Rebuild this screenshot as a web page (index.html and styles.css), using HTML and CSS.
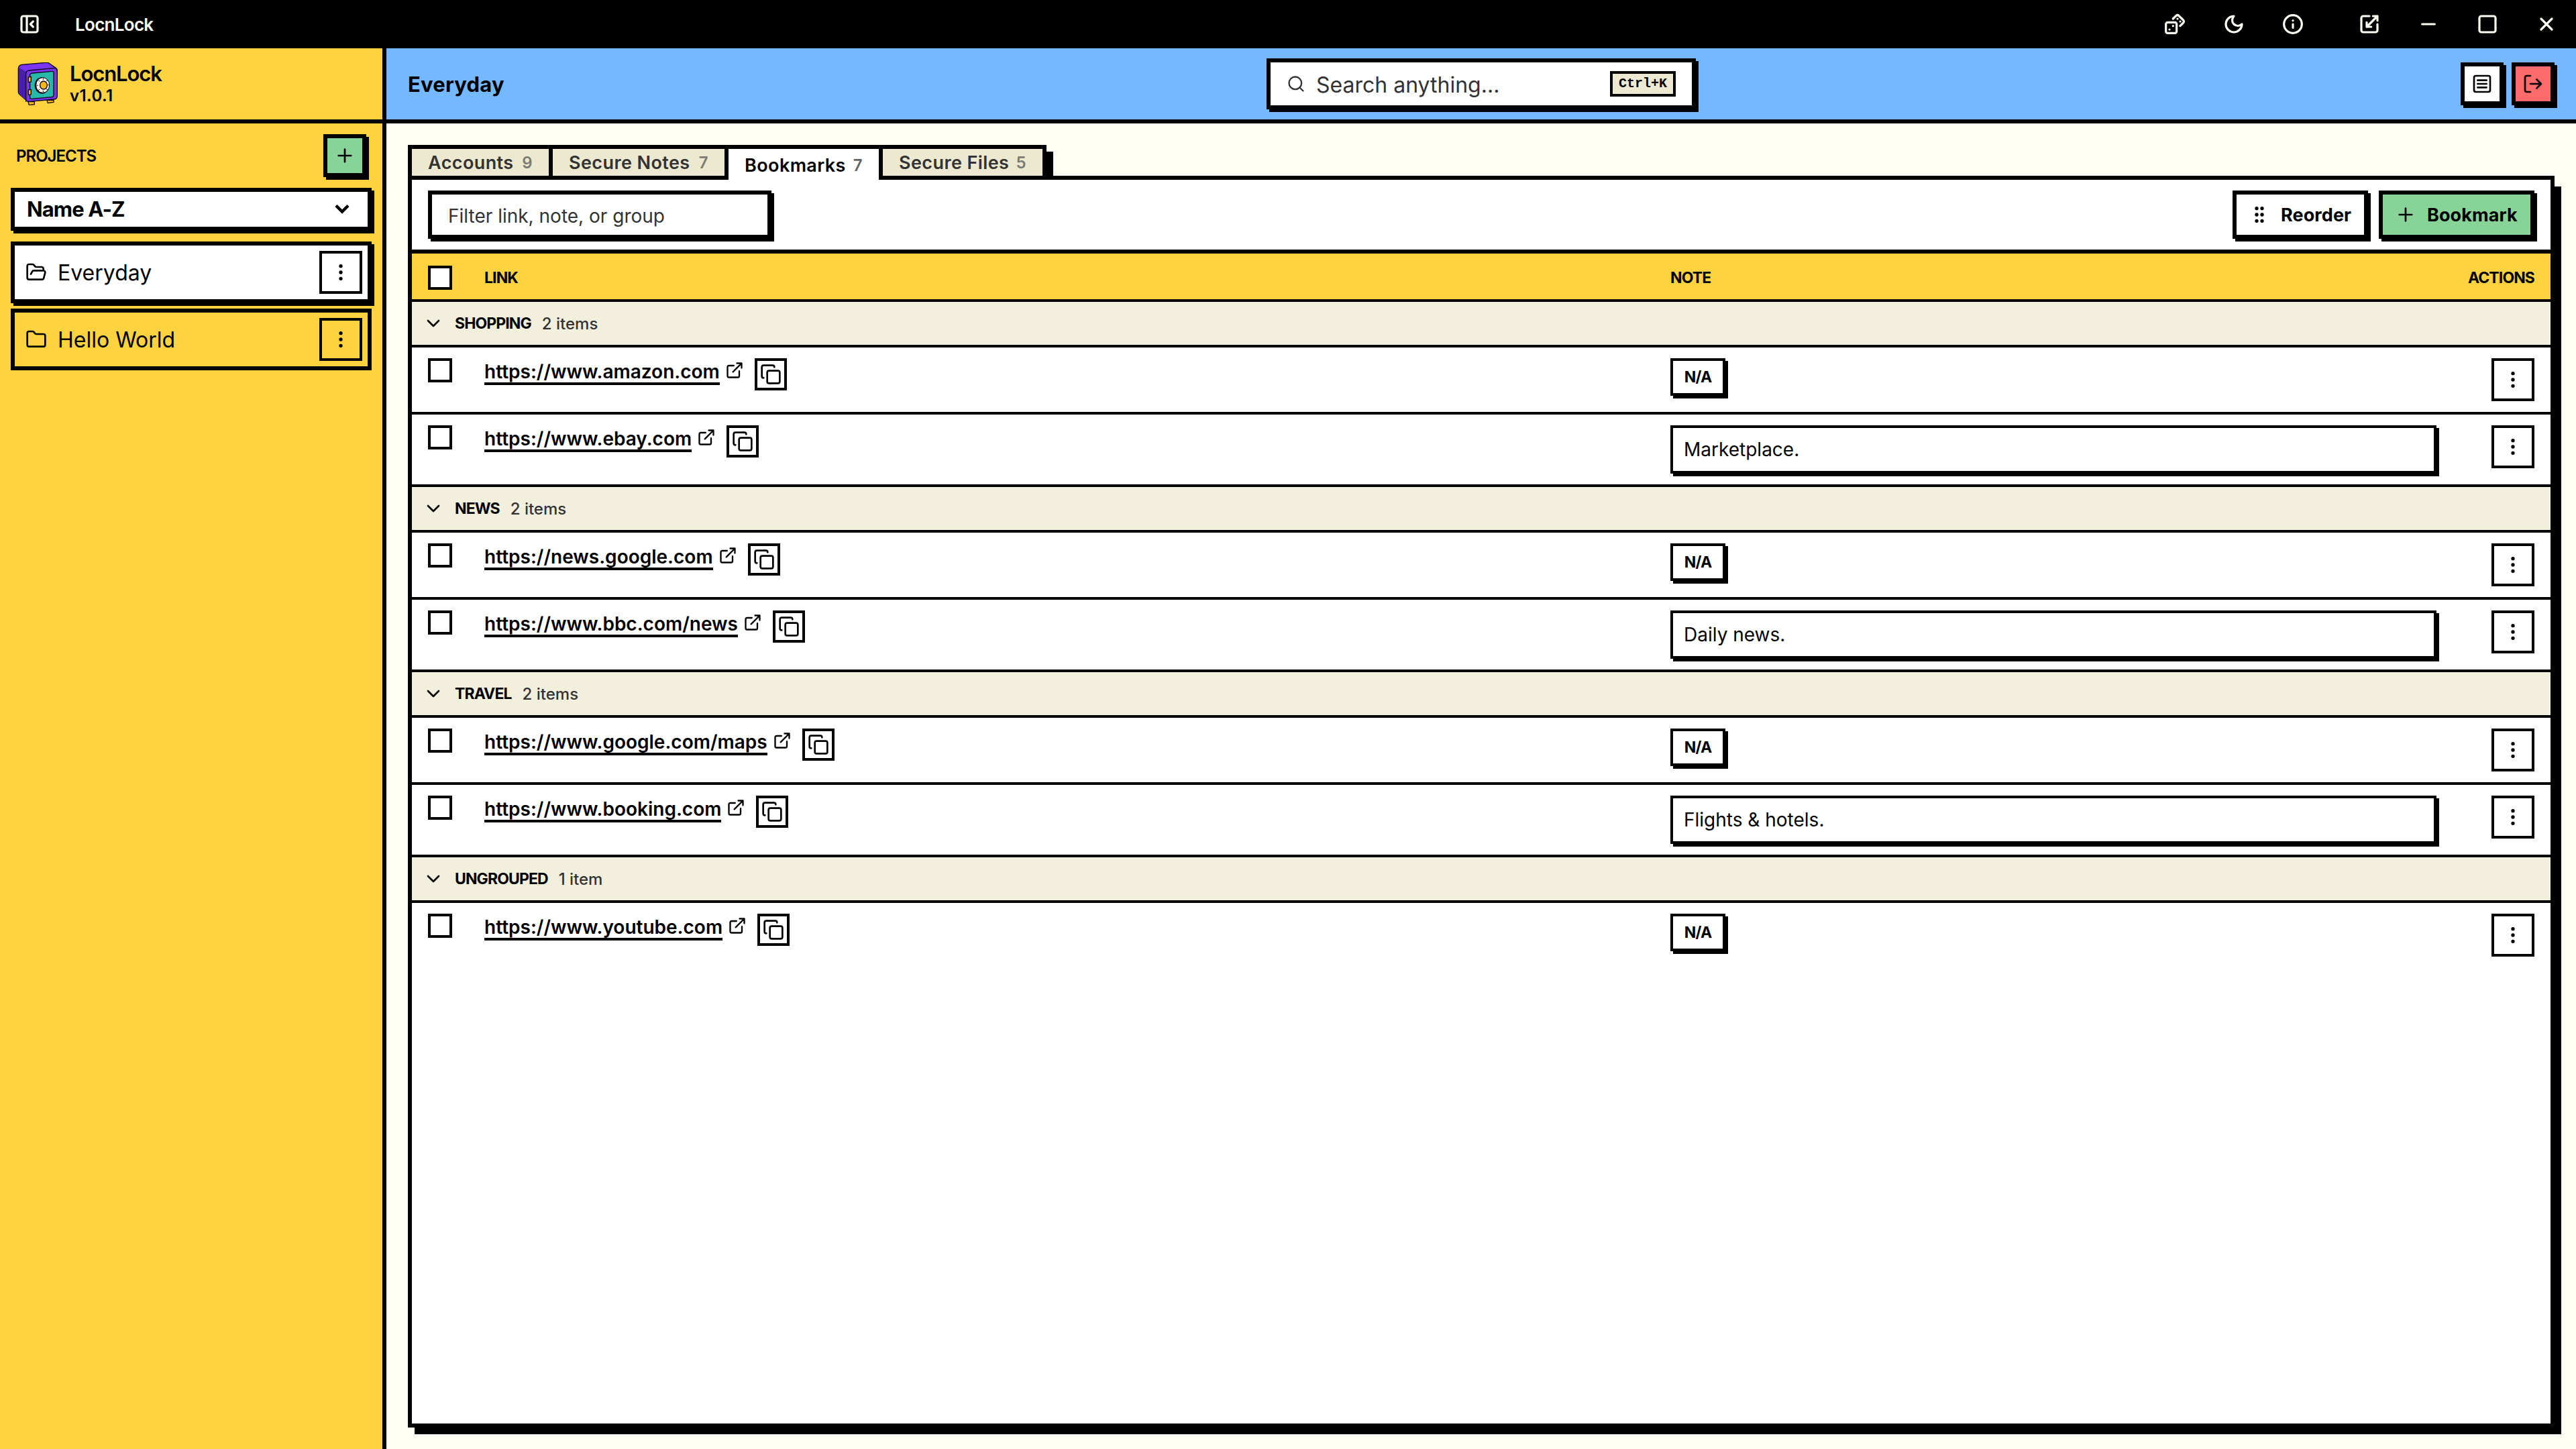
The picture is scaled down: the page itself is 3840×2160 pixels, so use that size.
FILE: index.html
```html
<!DOCTYPE html>
<html lang="en">
<head>
    <meta charset="UTF-8">
    <meta name="viewport" content="width=device-width, initial-scale=1.0">
    <title>LocnLock</title>
    <link rel="stylesheet" href="styles.css">
</head>
<body>
    <!-- Icon sprite -->
    <svg class="sprite">
        <symbol id="panel" viewBox="0 0 24 24"><rect x="3" y="3" width="18" height="18" rx="2"/><path d="M9 3v18M16 15l-3-3 3-3"/></symbol>
        <symbol id="dices" viewBox="0 0 24 24"><rect x="2" y="10" width="12" height="12" rx="2"/><path d="m17.92 14 3.5-3.5a2.24 2.24 0 0 0 0-3l-5-4.92a2.24 2.24 0 0 0-3 0L10 6M6 18h.01M10 14h.01M15 6h.01M18 9h.01"/></symbol>
        <symbol id="moon" viewBox="0 0 24 24"><path d="M12 3a6 6 0 0 0 9 9 9 9 0 1 1-9-9Z"/></symbol>
        <symbol id="info" viewBox="0 0 24 24"><circle cx="12" cy="12" r="10"/><path d="M12 16v-4M12 8h.01"/></symbol>
        <symbol id="scaling" viewBox="0 0 24 24"><path d="M12 3H5a2 2 0 0 0-2 2v14a2 2 0 0 0 2 2h14a2 2 0 0 0 2-2v-7M14 15H9v-5M16 3h5v5M21 3 9 15"/></symbol>
        <symbol id="minus" viewBox="0 0 24 24"><path d="M5 12h14"/></symbol>
        <symbol id="square" viewBox="0 0 24 24"><rect x="3" y="3" width="18" height="18" rx="2"/></symbol>
        <symbol id="close" viewBox="0 0 24 24"><path d="M18 6 6 18M6 6l12 12"/></symbol>
        <symbol id="plus" viewBox="0 0 24 24"><path d="M5 12h14M12 5v14"/></symbol>
        <symbol id="chevron" viewBox="0 0 24 24"><path d="m6 9 6 6 6-6"/></symbol>
        <symbol id="dots" viewBox="0 0 24 24"><circle cx="12" cy="12" r="1"/><circle cx="12" cy="5" r="1"/><circle cx="12" cy="19" r="1"/></symbol>
        <symbol id="grip" viewBox="0 0 24 24"><circle cx="9" cy="12" r="1"/><circle cx="9" cy="5" r="1"/><circle cx="9" cy="19" r="1"/><circle cx="15" cy="12" r="1"/><circle cx="15" cy="5" r="1"/><circle cx="15" cy="19" r="1"/></symbol>
        <symbol id="folder" viewBox="0 0 24 24"><path d="M20 20a2 2 0 0 0 2-2V8a2 2 0 0 0-2-2h-7.9a2 2 0 0 1-1.69-.9L9.6 3.9A2 2 0 0 0 7.93 3H4a2 2 0 0 0-2 2v13a2 2 0 0 0 2 2Z"/></symbol>
        <symbol id="folder-open" viewBox="0 0 24 24"><path d="m6 14 1.5-2.9A2 2 0 0 1 9.24 10H20a2 2 0 0 1 1.94 2.5l-1.54 6a2 2 0 0 1-1.95 1.5H4a2 2 0 0 1-2-2V5a2 2 0 0 1 2-2h3.9a2 2 0 0 1 1.69.9l.81 1.2a2 2 0 0 0 1.67.9H18a2 2 0 0 1 2 2v2"/></symbol>
        <symbol id="search" viewBox="0 0 24 24"><circle cx="11" cy="11" r="8"/><path d="m21 21-4.3-4.3"/></symbol>
        <symbol id="logs" viewBox="0 0 24 24"><rect x="3" y="3" width="18" height="18" rx="2"/><path d="M7 8h10M7 12h10M7 16h10"/></symbol>
        <symbol id="logout" viewBox="0 0 24 24"><path d="M9 21H5a2 2 0 0 1-2-2V5a2 2 0 0 1 2-2h4M16 17l5-5-5-5M21 12H9"/></symbol>
        <symbol id="external" viewBox="0 0 24 24"><path d="M15 3h6v6M10 14 21 3M18 13v6a2 2 0 0 1-2 2H5a2 2 0 0 1-2-2V8a2 2 0 0 1 2-2h6"/></symbol>
        <symbol id="copy" viewBox="0 0 24 24"><rect x="8" y="8" width="14" height="14" rx="2"/><path d="M4 16c-1.1 0-2-.9-2-2V4c0-1.1.9-2 2-2h10c1.1 0 2 .9 2 2"/></symbol>
    </svg>

    <header class="titlebar">
        <span class="win-btn"><svg class="icon"><use href="#panel"/></svg></span>
        <span class="win-title">LocnLock</span>
        <div class="win-group">
            <span class="win-btn"><svg class="icon"><use href="#dices"/></svg></span>
            <span class="win-btn"><svg class="icon"><use href="#moon"/></svg></span>
            <span class="win-btn"><svg class="icon"><use href="#info"/></svg></span>
        </div>
        <div class="win-group">
            <span class="win-btn"><svg class="icon"><use href="#scaling"/></svg></span>
            <span class="win-btn"><svg class="icon"><use href="#minus"/></svg></span>
            <span class="win-btn"><svg class="icon"><use href="#square"/></svg></span>
            <span class="win-btn"><svg class="icon"><use href="#close"/></svg></span>
        </div>
    </header>

    <div class="app">
        <aside class="sidebar">
            <div class="brand">
                <svg class="logo" viewBox="24 30 192 192" stroke="#0b0418" stroke-width="4" stroke-linejoin="round">
                    <path d="M78 206h28v12l-24 3zM162 199h30v9l-26 4z" fill="#ffb811"/>
                    <path d="M34 60q0-18 16-20l108-9q8-1 12 2l32 22q6 4 6 12v112q0 15-14 16l-112 10q-6 1-10-3l-34-30q-4-4-4-10z" fill="#7a35f0"/>
                    <path d="M38 54l34 20q-5 6-5 14v110l-27-24q-4-4-4-10V60z" fill="#4a1fa8" stroke="none"/>
                    <path d="M68 206V82q0-14 14-16l110-10q16-1 16 14" fill="none"/>
                    <path d="M96 78l88-8q8-1 8 8v98q0 8-8 9l-90 8q-8 1-8-7V88q0-9 10-10z" fill="#26b8a9"/>
                    <path d="M79 96l12-2v23l-12 2zM79 153l12-2v22l-12 2z" fill="#ffb811"/>
                    <ellipse cx="140" cy="133" rx="33" ry="37" fill="#0b0418" stroke="none"/>
                    <ellipse cx="143" cy="132" rx="30" ry="34" fill="#fff4ea" stroke-width="3"/>
                    <path d="M145 101v7M145 156v7M116 133h6M166 131h6M125 110l4 5M164 109l-4 5M125 155l4-5M164 153l-4-5" stroke-width="3"/>
                    <ellipse cx="147" cy="132" rx="16" ry="18" fill="#ffb811"/>
                </svg>
                <div>
                    <div class="brand-name">LocnLock</div>
                    <div class="brand-version">v1.0.1</div>
                </div>
            </div>
            <div class="projects">
                <div class="projects-head">
                    <span>PROJECTS</span>
                    <button class="btn square green"><svg class="icon"><use href="#plus"/></svg></button>
                </div>
                <div class="select">
                    <span>Name A-Z</span>
                    <svg class="icon"><use href="#chevron"/></svg>
                </div>
                <div class="project active">
                    <svg class="icon"><use href="#folder-open"/></svg>
                    <span>Everyday</span>
                    <button class="more"><svg class="icon"><use href="#dots"/></svg></button>
                </div>
                <div class="project">
                    <svg class="icon"><use href="#folder"/></svg>
                    <span>Hello World</span>
                    <button class="more"><svg class="icon"><use href="#dots"/></svg></button>
                </div>
            </div>
        </aside>

        <main class="main">
            <div class="topbar">
                <h1>Everyday</h1>
                <div class="search">
                    <svg class="icon small"><use href="#search"/></svg>
                    <span>Search anything...</span>
                    <kbd>Ctrl+K</kbd>
                </div>
                <div class="top-actions">
                    <button class="btn square"><svg class="icon"><use href="#logs"/></svg></button>
                    <button class="btn square red"><svg class="icon"><use href="#logout"/></svg></button>
                </div>
            </div>

            <div class="content">
                <div class="tabs-row">
                    <nav class="tabs">
                        <a class="tab accounts">Accounts <span class="count">9</span></a>
                        <a class="tab notes">Secure Notes <span class="count">7</span></a>
                        <a class="tab bookmarks active">Bookmarks <span class="count">7</span></a>
                        <a class="tab files">Secure Files <span class="count">5</span></a>
                    </nav>
                </div>

                <section class="panel">
                    <div class="toolbar">
                        <div class="filter">Filter link, note, or group</div>
                        <div class="toolbar-actions">
                            <button class="btn reorder"><svg class="icon"><use href="#grip"/></svg>Reorder</button>
                            <button class="btn add green"><svg class="icon"><use href="#plus"/></svg>Bookmark</button>
                        </div>
                    </div>

                    <div class="table">
                        <div class="thead">
                            <span class="checkbox"></span>
                            <span>LINK</span>
                            <span>NOTE</span>
                            <span class="right">ACTIONS</span>
                        </div>

                        <div class="group"><svg class="icon"><use href="#chevron"/></svg><b>SHOPPING</b><span>2 items</span></div>
                        <div class="row">
                            <span class="checkbox"></span>
                            <div class="link"><a>https://www.amazon.com</a><svg class="icon small"><use href="#external"/></svg><button class="copy"><svg class="icon"><use href="#copy"/></svg></button></div>
                            <div><span class="na">N/A</span></div>
                            <button class="more"><svg class="icon"><use href="#dots"/></svg></button>
                        </div>
                        <div class="row">
                            <span class="checkbox"></span>
                            <div class="link"><a>https://www.ebay.com</a><svg class="icon small"><use href="#external"/></svg><button class="copy"><svg class="icon"><use href="#copy"/></svg></button></div>
                            <div class="note">Marketplace.</div>
                            <button class="more"><svg class="icon"><use href="#dots"/></svg></button>
                        </div>

                        <div class="group"><svg class="icon"><use href="#chevron"/></svg><b>NEWS</b><span>2 items</span></div>
                        <div class="row">
                            <span class="checkbox"></span>
                            <div class="link"><a>https://news.google.com</a><svg class="icon small"><use href="#external"/></svg><button class="copy"><svg class="icon"><use href="#copy"/></svg></button></div>
                            <div><span class="na">N/A</span></div>
                            <button class="more"><svg class="icon"><use href="#dots"/></svg></button>
                        </div>
                        <div class="row">
                            <span class="checkbox"></span>
                            <div class="link"><a>https://www.bbc.com/news</a><svg class="icon small"><use href="#external"/></svg><button class="copy"><svg class="icon"><use href="#copy"/></svg></button></div>
                            <div class="note">Daily news.</div>
                            <button class="more"><svg class="icon"><use href="#dots"/></svg></button>
                        </div>

                        <div class="group"><svg class="icon"><use href="#chevron"/></svg><b>TRAVEL</b><span>2 items</span></div>
                        <div class="row">
                            <span class="checkbox"></span>
                            <div class="link"><a>https://www.google.com/maps</a><svg class="icon small"><use href="#external"/></svg><button class="copy"><svg class="icon"><use href="#copy"/></svg></button></div>
                            <div><span class="na">N/A</span></div>
                            <button class="more"><svg class="icon"><use href="#dots"/></svg></button>
                        </div>
                        <div class="row">
                            <span class="checkbox"></span>
                            <div class="link"><a>https://www.booking.com</a><svg class="icon small"><use href="#external"/></svg><button class="copy"><svg class="icon"><use href="#copy"/></svg></button></div>
                            <div class="note">Flights &amp; hotels.</div>
                            <button class="more"><svg class="icon"><use href="#dots"/></svg></button>
                        </div>

                        <div class="group"><svg class="icon"><use href="#chevron"/></svg><b>UNGROUPED</b><span>1 item</span></div>
                        <div class="row">
                            <span class="checkbox"></span>
                            <div class="link"><a>https://www.youtube.com</a><svg class="icon small"><use href="#external"/></svg><button class="copy"><svg class="icon"><use href="#copy"/></svg></button></div>
                            <div><span class="na">N/A</span></div>
                            <button class="more"><svg class="icon"><use href="#dots"/></svg></button>
                        </div>
                    </div>
                </section>
            </div>
        </main>
    </div>
</body>
</html>
```
FILE: styles.css
```css
* {
    box-sizing: border-box;
}
body {
    margin: 0;
    height: 100vh;
    display: flex;
    flex-direction: column;
    overflow: hidden;
    font-family: Inter, sans-serif;
    font-size: 28px;
    color: #000;
    background: #fffef5;
}
button {
    font-family: inherit;
    color: inherit;
    padding: 0;
    margin: 0;
}
.sprite {
    display: none;
}
.icon {
    width: 32px;
    height: 32px;
    flex: none;
    display: block;
    fill: none;
    stroke: currentColor;
    stroke-width: 2;
    stroke-linecap: round;
    stroke-linejoin: round;
}
.icon.small {
    width: 28px;
    height: 28px;
}

/* Title bar */
.titlebar {
    height: 72px;
    flex: none;
    display: flex;
    align-items: center;
    background: #000;
    color: #fffef5;
}
.titlebar .icon {
    stroke-width: 2.4;
}
.win-btn {
    width: 88px;
    display: flex;
    justify-content: center;
}
.win-title {
    margin-left: 24px;
    margin-right: auto;
    font-size: 26px;
    font-weight: 600;
    letter-spacing: -0.7px;
}
.win-group {
    display: flex;
}
.win-group + .win-group {
    margin-left: 26px;
}

.app {
    flex: 1;
    display: flex;
    min-height: 0;
}

/* Sidebar */
.sidebar {
    width: 576px;
    flex: none;
    border-right: 6px solid #000;
    background: #ffd23f;
}
.brand {
    height: 112px;
    padding-left: 24px;
    display: flex;
    align-items: center;
    gap: 16px;
    border-bottom: 6px solid #000;
}
.logo {
    width: 64px;
    height: 64px;
}
.brand-name {
    font-size: 31px;
    font-weight: 600;
    line-height: 34px;
    letter-spacing: -1.1px;
}
.brand-version {
    font-size: 24px;
    font-weight: 600;
    line-height: 31px;
    letter-spacing: 0.4px;
}
.projects {
    padding: 16px;
}
.projects-head {
    display: flex;
    align-items: center;
    justify-content: space-between;
    padding: 0 8px;
    margin-bottom: 16px;
    font-size: 24px;
    font-weight: 600;
    letter-spacing: -1px;
}
.btn {
    height: 72px;
    display: flex;
    align-items: center;
    gap: 16px;
    border: 6px solid #000;
    background: #fff;
    box-shadow: 4px 4px 0 #000;
    font-size: 27px;
    font-weight: 700;
    letter-spacing: 0.1px;
    white-space: nowrap;
}
.btn.square {
    width: 64px;
    height: 64px;
    justify-content: center;
}
.green {
    background: #88d498;
}
.red {
    background: #ff6b6b;
}
.select {
    height: 64px;
    display: flex;
    align-items: center;
    justify-content: space-between;
    padding: 0 20px 2px 18px;
    margin-bottom: 16px;
    border: 6px solid #000;
    background: #fff;
    box-shadow: 4px 4px 0 #000;
    font-size: 31px;
    font-weight: 700;
    letter-spacing: -0.9px;
}
.select .icon {
    width: 36px;
    height: 36px;
    stroke-width: 3;
    stroke-linecap: butt;
    stroke-linejoin: miter;
}
.project {
    height: 92px;
    display: flex;
    align-items: center;
    gap: 16px;
    padding: 0 8px 0 16px;
    margin-bottom: 8px;
    border: 6px solid #000;
    font-size: 32px;
}
.project.active {
    background: #fff;
    box-shadow: 4px 4px 0 #000;
}
.more {
    width: 64px;
    height: 64px;
    display: flex;
    align-items: center;
    justify-content: center;
    margin-left: auto;
    border: 4px solid #000;
    background: transparent;
}

/* Top bar */
.main {
    flex: 1;
    min-width: 0;
    display: flex;
    flex-direction: column;
}
.topbar {
    height: 112px;
    flex: none;
    display: grid;
    grid-template-columns: 1fr 640px 1fr;
    align-items: center;
    padding: 0 32px;
    border-bottom: 6px solid #000;
    background: #74b9ff;
}
.topbar h1 {
    margin: 0;
    font-size: 31px;
    font-weight: 700;
    letter-spacing: 0.2px;
}
.search {
    height: 76px;
    display: flex;
    align-items: center;
    gap: 16px;
    padding: 0 24px;
    border: 6px solid #000;
    background: #fff;
    box-shadow: 4px 4px 0 #000;
    font-size: 32px;
    color: #333;
}
.search span {
    padding-top: 2px;
}
.search kbd {
    width: 98px;
    height: 38px;
    margin-left: auto;
    border: 4px solid #000;
    background: #ece9d0;
    color: #000;
    font: bold 20px/30px "Liberation Mono", monospace;
    text-align: center;
}
.top-actions {
    display: flex;
    justify-content: flex-end;
    gap: 12px;
}

/* Tabs */
.content {
    flex: 1;
    display: flex;
    flex-direction: column;
    padding: 32px;
}
.tabs-row {
    height: 52px;
    display: flex;
    border-bottom: 6px solid #000;
}
.tabs {
    display: flex;
    border: 6px solid #000;
    border-bottom: 0;
    box-shadow: 10px 10px 0 #000;
}
.tab {
    height: 40px;
    display: flex;
    align-items: center;
    justify-content: space-between;
    padding: 1px 24px 0;
    background: #ece9d0;
    color: #333;
    font-size: 27px;
    font-weight: 600;
    letter-spacing: 0.4px;
    white-space: nowrap;
}
.tab + .tab {
    border-left: 6px solid #000;
}
.tab.accounts {
    width: 204px;
}
.tab.notes {
    width: 262px;
}
.tab.bookmarks {
    width: 230px;
}
.tab.files {
    width: 244px;
}
.tab.active {
    position: relative;
    z-index: 1;
    height: 46px;
    padding-top: 3px;
    background: #fff;
    color: #000;
}
.count {
    font-size: 24px;
    opacity: 0.6;
}

/* Panel */
.panel {
    flex: 1;
    position: relative;
    border: 6px solid #000;
    border-top: 0;
    background: #fff;
    box-shadow: 10px 10px 0 #000;
}
.toolbar {
    height: 110px;
    display: flex;
    justify-content: space-between;
    padding: 16px 24px 0;
    border-bottom: 6px solid #000;
}
.filter {
    width: 512px;
    height: 72px;
    padding-left: 24px;
    border: 6px solid #000;
    box-shadow: 4px 4px 0 #000;
    line-height: 65px;
    color: #333;
}
.toolbar-actions {
    display: flex;
    gap: 16px;
}
.btn.reorder {
    width: 202px;
    padding-left: 18px;
}
.btn.add {
    width: 232px;
    padding-left: 18px;
}

/* Table */
.thead,
.row {
    display: grid;
    grid-template-columns: 84px 1768px 1142px 1fr;
    padding: 0 24px;
    border-bottom: 4px solid #000;
}
.thead {
    height: 72px;
    align-items: center;
    padding-top: 4px;
    background: #ffd23f;
    font-size: 23px;
    font-weight: 700;
    letter-spacing: -0.9px;
}
.checkbox {
    width: 36px;
    height: 36px;
    border: 4px solid #000;
    background: #fff;
}
.right {
    text-align: right;
}
.group {
    height: 68px;
    display: flex;
    align-items: center;
    gap: 16px;
    padding-left: 16px;
    border-bottom: 4px solid #000;
    background: #f3efdd;
    font-size: 24px;
}
.group b {
    font-size: 23px;
    letter-spacing: -0.9px;
}
.group span {
    font-weight: 500;
    color: #333;
}
.row {
    padding-top: 16px;
    padding-bottom: 16px;
}
.row:last-child {
    border-bottom: 0;
}
.link {
    display: flex;
    align-items: flex-start;
}
.link a {
    height: 40px;
    border-bottom: 4px solid #000;
    font-weight: 600;
    line-height: 40px;
}
.link .small {
    margin: 4px 16px 0 8px;
}
.copy {
    width: 48px;
    height: 48px;
    display: flex;
    align-items: center;
    justify-content: center;
    border: 4px solid #000;
    background: #fff;
}
.na {
    width: 82px;
    height: 56px;
    display: flex;
    align-items: center;
    justify-content: center;
    border: 4px solid #000;
    box-shadow: 4px 4px 0 #000;
    font-size: 23px;
    font-weight: 700;
    letter-spacing: -0.8px;
}
.note {
    height: 72px;
    padding-left: 16px;
    border: 4px solid #000;
    box-shadow: 4px 4px 0 #000;
    line-height: 64px;
}
```
